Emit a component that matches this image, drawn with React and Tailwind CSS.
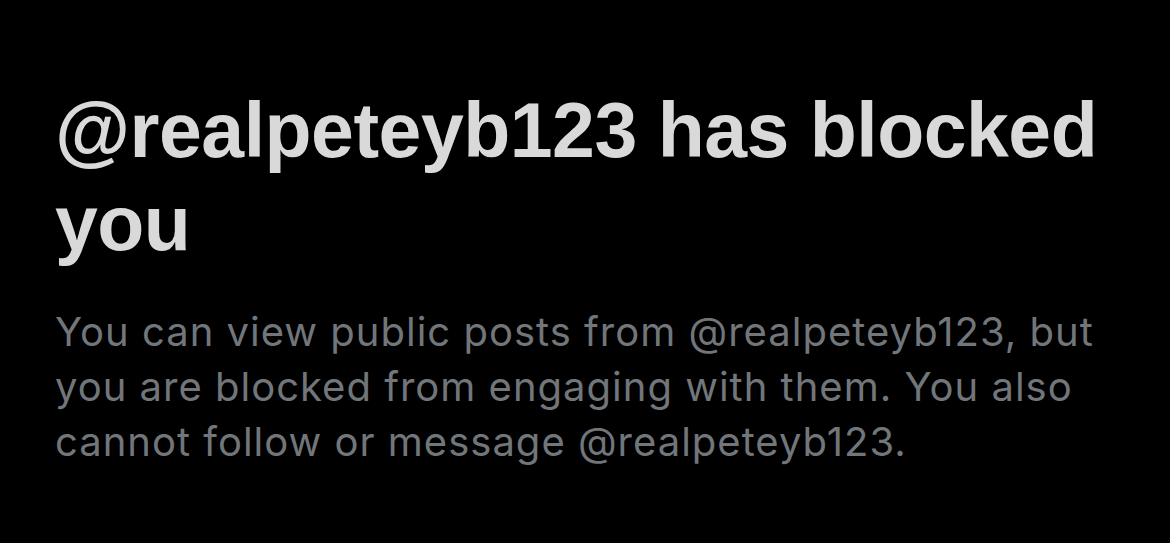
export default function App() {
  return (
    <div className="w-[1170px] h-[543px] bg-black overflow-hidden pl-[55px] pr-[40px] pt-[84px] flex flex-col">
      <h1 className="font-['Liberation_Sans',Arial,sans-serif] text-[77px] leading-[93px] font-bold text-[#d9d9d9] tracking-[-0.5px]">
        @realpeteyb123 has blocked you
      </h1>
      <p className="mt-[34px] font-['Inter','Liberation_Sans',sans-serif] text-[40px] leading-[55px] text-[#71767b] tracking-[1px]">
        You can view public posts from @realpeteyb123, but you are blocked from engaging with them. You also cannot follow or message @realpeteyb123.
      </p>
    </div>
  );
}
